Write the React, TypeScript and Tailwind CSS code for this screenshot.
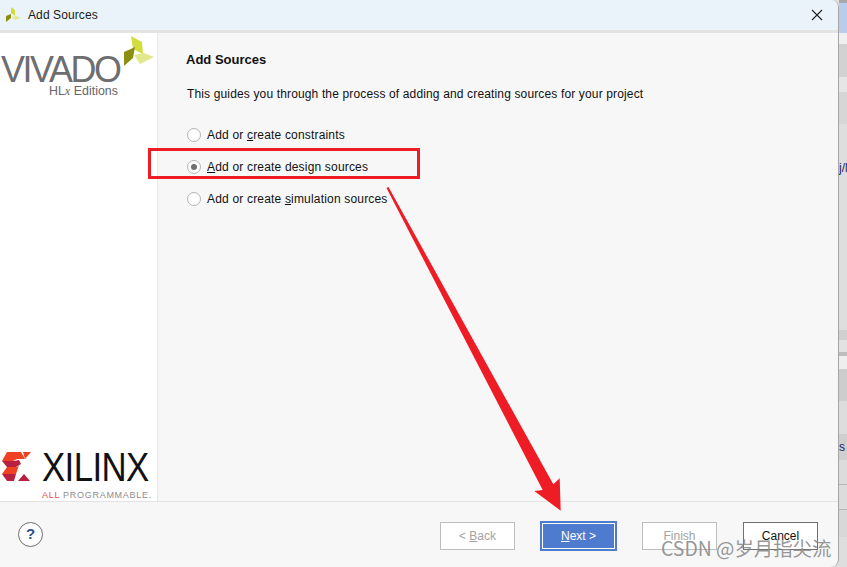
const stripRows = [
  ['h-[3px]', 'bg-[#a8a8a8]', ''],
  ['h-[30px]', 'bg-[#b9cdea]', ''],
  ['h-[11px]', 'bg-[#f0f0f0]', ''],
  ['h-[33px]', 'bg-[#d2d2d2]', ''],
  ['h-[15px]', 'bg-[#e6e6e6]', ''],
  ['h-[32px]', 'bg-[#d6d6d6]', ''],
  ['h-[36px]', 'bg-[#dedede]', ''],
  ['h-[16px]', 'bg-[#dedede]', 'j/l'],
  ['h-[154px]', 'bg-[#dedede]', ''],
  ['h-[10px]', 'bg-[#d0d0d0]', ''],
  ['h-[12px]', 'bg-[#e2e2e2]', ''],
  ['h-[4px]', 'bg-[#bdbdbd]', ''],
  ['h-[13px]', 'bg-[#eeeeee]', ''],
  ['h-[32px]', 'bg-[#cdcdcd]', ''],
  ['h-[33px]', 'bg-[#dddddd]', ''],
  ['h-[26px]', 'bg-[#cfcfcf]', 's'],
  ['h-[24px]', 'bg-[#dcdcdc]', ''],
  ['h-[1px]', 'bg-[#b5b5b5]', ''],
  ['h-[24px]', 'bg-[#dcdcdc]', ''],
  ['h-[1px]', 'bg-[#b5b5b5]', ''],
  ['h-[27px]', 'bg-[#d8d8d8]', ''],
];

function VivadoLogo() {
  return (
    <div className="relative h-[67px] w-[157px] shrink-0 bg-white">
      <svg className="absolute left-[122px] top-[3px]" width="34" height="30" viewBox="0 0 34 30">
        <polygon points="9,0 20,6 21,18 11,13" fill="#d3dc3f" />
        <polygon points="2,16 13,11 11,22 2,30" fill="#8a8f12" />
        <polygon points="12,19 22,17 32,21 18,28" fill="#e2e88c" />
      </svg>
      <span className="absolute left-[1px] top-[15px] origin-left scale-x-[0.97] font-['Liberation_Sans',sans-serif] text-[37px] leading-[44px] tracking-[-2.5px] text-[#6e6e70]">
        VIVADO
      </span>
      <span className="absolute left-[49px] top-[51px] font-['Liberation_Sans',sans-serif] text-[12.4px] leading-[14px] text-[#666668]">
        HL<i className="font-['Liberation_Serif',serif]">x</i> Editions
      </span>
    </div>
  );
}

function XilinxLogo() {
  return (
    <div className="relative h-[50px] w-[157px] shrink-0 bg-white">
      <svg className="absolute left-[2px] top-[1px]" width="29" height="30" viewBox="0 0 29 30">
        <polygon points="5,0 19,0 23,7 15,7 11,9 0,9" fill="#ee4223" />
        <polygon points="21,0 29,0 23,7" fill="#ee4223" />
        <polygon points="0,9 12,9 17,8 19,12 14,15 5,15" fill="#b72041" />
        <polygon points="5,15 15,15 17,13 14,22 0,22" fill="#ee4223" />
        <polygon points="0,22 14,22 12,29 5,29" fill="#b72041" />
        <polygon points="16,29 22,22 28,29" fill="#b72041" />
      </svg>
      <span className="absolute left-[42px] top-[-7px] origin-left scale-x-[0.87] font-['Liberation_Sans',sans-serif] text-[40px] leading-[46px] tracking-[-0.7px] text-[#111111]">
        XILINX
      </span>
      <span className="absolute left-[42px] top-[39px] whitespace-nowrap font-['Liberation_Sans',sans-serif] text-[9px] leading-[11px] tracking-[0.72px] text-[#8d8d8d]">
        <span className="text-[#e8503a]">ALL</span> PROGRAMMABLE.
      </span>
    </div>
  );
}

function Radio({ checked, children }: { checked?: boolean; children: React.ReactNode }) {
  return (
    <div className="flex h-[32px] items-center gap-[6px] pl-[1px]">
      <span className="flex h-[14px] w-[14px] items-center justify-center rounded-full border border-[#b4b4b4] bg-white">
        {checked && <span className="h-[6px] w-[6px] rounded-full bg-[#707070]" />}
      </span>
      <span className="text-[12px] leading-[16px] tracking-[0.18px] text-[#111111]">{children}</span>
    </div>
  );
}

function FooterButton({ children, tone, className }: { children: React.ReactNode; tone: 'off' | 'on'; className?: string }) {
  const color = tone === 'off' ? 'border-[#bdbdbd] text-[#a3a3a3]' : 'border-[#707070] text-[#111111]';
  return (
    <div className={`flex h-[28px] w-[75px] items-center justify-center border bg-white text-[12px] ${color} ${className ?? ''}`}>
      {children}
    </div>
  );
}

export default function App() {
  return (
    <div className="relative flex h-[567px] w-[847px] overflow-hidden bg-[#dedede] font-['Liberation_Sans',sans-serif]">
      <div className="flex h-full w-[839px] shrink-0 flex-col overflow-hidden rounded-r-[8px] border-r border-[#a5a5a5] bg-[#f7f7f7]">
        <div className="flex h-[30px] shrink-0 items-center justify-between bg-[#eaf3f9] pl-[6px] pr-[15px]">
          <div className="flex items-center gap-[6px]">
            <svg width="16" height="16" viewBox="0 0 16 16">
              <polygon points="5,0 9,3 9,9 5,6" fill="#d3dc3f" />
              <polygon points="0,9 5,7 5,11 0,15" fill="#8a8f12" />
              <polygon points="6,10 10,9 15,11 9,13" fill="#e2e88c" />
            </svg>
            <span className="text-[12px] tracking-[0.1px] text-[#1a1a1a]">Add Sources</span>
          </div>
          <svg width="12" height="12" viewBox="0 0 12 12" stroke="#222222" strokeWidth="1.1" fill="none">
            <path d="M1 1 L11 11 M11 1 L1 11" />
          </svg>
        </div>
        <div className="h-[3px] shrink-0 bg-[#e3e3e3]" />

        <div className="flex min-h-0 flex-1">
          <div className="flex w-[158px] shrink-0 flex-col justify-between border-r border-[#e8e8e8] bg-white">
            <VivadoLogo />
            <XilinxLogo />
          </div>
          <div className="flex-1 pl-[28px] pt-[19px]">
            <h2 className="text-[13px] font-bold leading-[16px] text-[#111111]">Add Sources</h2>
            <p className="mt-[18px] pl-[1px] text-[12px] leading-[16px] tracking-[0.145px] text-[#111111]">
              This guides you through the process of adding and creating sources for your project
            </p>
            <div className="mt-[17px]">
              <Radio>
                Add or <span className="underline">c</span>reate constraints
              </Radio>
              <Radio checked>
                <span className="underline">A</span>dd or create design sources
              </Radio>
              <Radio>
                Add or create <span className="underline">s</span>imulation sources
              </Radio>
            </div>
          </div>
        </div>

        <div className="flex h-[66px] shrink-0 items-center justify-between border-t border-[#e3e3e3] pl-[18px] pr-[20px]">
          <div className="flex h-[25px] w-[25px] items-center justify-center rounded-full border border-[#707070] bg-white text-[15px] font-bold text-[#2f4f8f]">
            ?
          </div>
          <div className="mt-[3px] flex items-center">
            <FooterButton tone="off">
              <span>
                &lt; <span className="underline">B</span>ack
              </span>
            </FooterButton>
            <div className="ml-[25px] flex h-[30px] w-[77px] items-center justify-center border-2 border-[#4f7bcf] bg-[#4f7bcf] text-[12px] text-white outline outline-1 -outline-offset-3 outline-white">
              <span>
                <span className="underline">N</span>ext &gt;
              </span>
            </div>
            <FooterButton tone="off" className="ml-[25px]">Finish</FooterButton>
            <FooterButton tone="on" className="ml-[26px]">Cancel</FooterButton>
          </div>
        </div>
      </div>

      <div className="flex min-w-0 flex-1 flex-col">
        {stripRows.map(([h, bg, text], i) => (
          <div key={i} className={`flex ${h} ${bg} shrink-0 items-center overflow-hidden text-[12px] text-[#222266]`}>
            {text}
          </div>
        ))}
      </div>

      {/* annotations pasted on top of the dialog */}
      <div className="absolute left-[148px] top-[148px] h-[31px] w-[272px] border-[3px] border-[#ee1c25]" />
      <svg className="absolute left-0 top-0" width="847" height="567" viewBox="0 0 847 567">
        <polygon
          points="386.5,188 388.5,187 553.3,484.3 559.7,478.3 560.7,510.7 534.3,491 542.7,490"
          fill="#ee1c25"
        />
      </svg>
      <span className="absolute left-[661px] top-[536px] whitespace-nowrap font-['Noto_Sans_CJK_SC','Liberation_Sans',sans-serif] text-[19.4px] leading-[24px] text-[#8a8a8a]/90">
        CSDN @岁月指尖流
      </span>
    </div>
  );
}
